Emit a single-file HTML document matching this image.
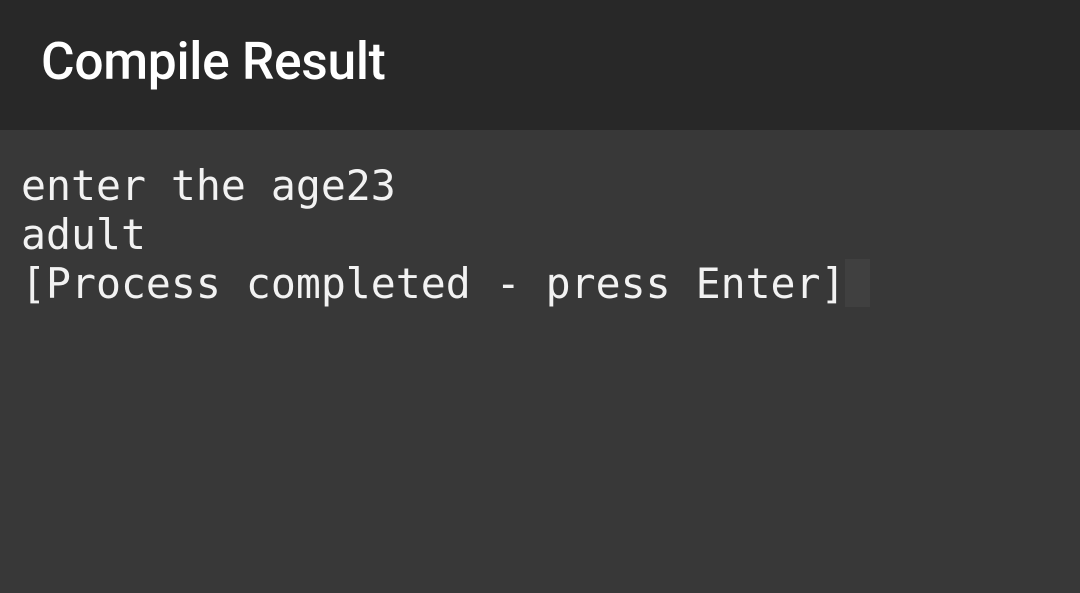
<!DOCTYPE html>
<html><head><meta charset="utf-8"><style>
html,body{margin:0;padding:0;width:1080px;height:593px;overflow:hidden;background:#383838;}
.h{position:absolute;left:0;top:0;width:1080px;height:130px;background:#282828;}
.t{position:absolute;left:41px;top:31px;font:500 51.5px "Roboto","Liberation Sans",sans-serif;color:#fff;letter-spacing:-0.3px;}
.c{position:absolute;left:21px;top:161px;font:41.5px/49px "DejaVu Sans Mono","Liberation Mono",monospace;color:#f2f2f2;white-space:pre;}
.cur{position:absolute;left:845px;top:259px;width:25px;height:48px;background:#404040;}
</style></head><body>
<div class="h"><div class="t">Compile Result</div></div>
<div class="c">enter the age23
adult
[Process completed - press Enter]</div>
<div class="cur"></div>
</body></html>
